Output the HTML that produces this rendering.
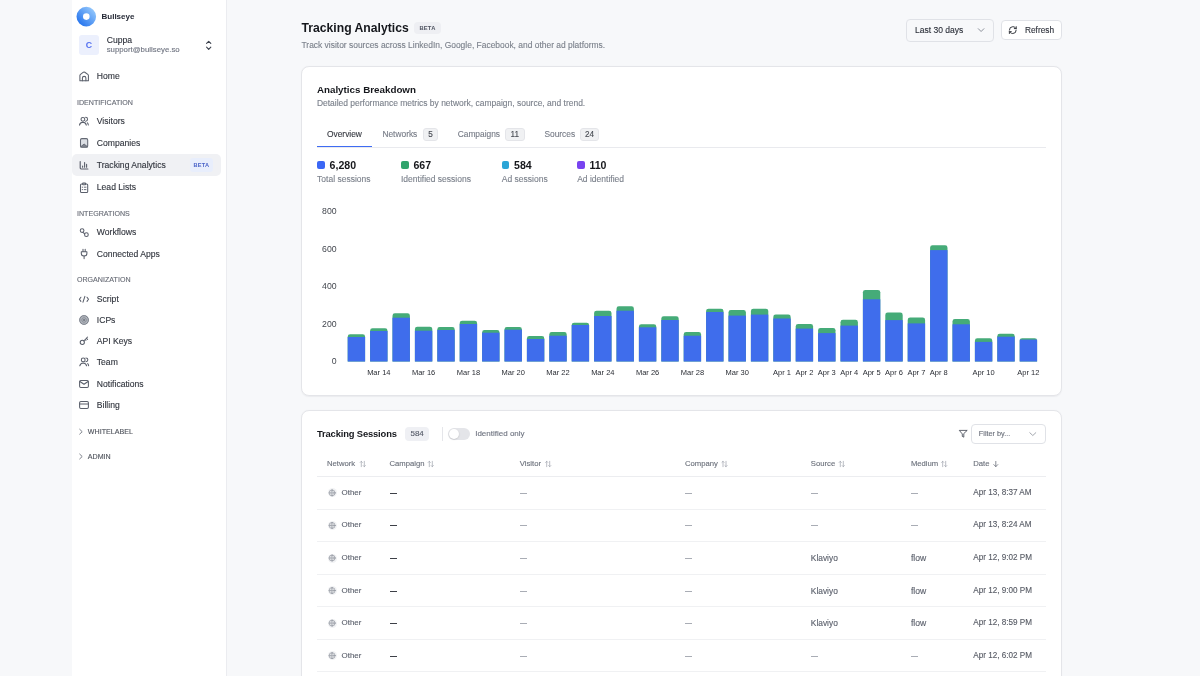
<!DOCTYPE html>
<html><head><meta charset="utf-8">
<style>
*{box-sizing:border-box;margin:0;padding:0}
html,body{width:1200px;height:676px;overflow:hidden}
body{will-change:transform;position:relative;background:#f7f8fa;font-family:"Liberation Sans",sans-serif;color:#1f2330}
.a{position:absolute}
.t{position:absolute;white-space:nowrap;line-height:20px;height:20px;-webkit-text-stroke:0.12px currentColor}
.t[style*="font-weight:700"]{-webkit-text-stroke:0}
svg{position:absolute;overflow:visible}
#sb{position:absolute;left:72px;top:0;width:155px;height:676px;background:#fff;border-right:1px solid #ebecf0}
.nav{font-size:8.6px;color:#30343d}
.sec{font-size:7.1px;color:#676b75;letter-spacing:0.02px}
.ic{fill:none;stroke-linecap:round;stroke-linejoin:round}
svg{stroke-width:1.1}
.card{position:absolute;left:301px;width:761px;background:#fff;border:1px solid #e4e5e9;border-radius:8px;box-shadow:0 0.6px 1.2px rgba(16,24,40,0.05)}
</style></head><body>
<!-- SIDEBAR -->
<div id="sb"></div>
<!-- logo -->
<svg width="1200" height="676" style="left:0;top:0">
  <defs>
    <linearGradient id="lg" x1="0" y1="1" x2="1" y2="0">
      <stop offset="0" stop-color="#2a78ee"/>
      <stop offset="1" stop-color="#8ec3fb"/>
    </linearGradient>
  </defs>
  <circle cx="86.3" cy="16.6" r="6.55" fill="none" stroke="url(#lg)" stroke-width="6.5"/>
</svg>
<div class="t" style="left:101.5px;top:7px;font-size:8px;font-weight:700;color:#1f2330">Bullseye</div>
<!-- account -->
<div class="a" style="left:79px;top:35px;width:20px;height:20px;border-radius:3px;background:#ecf0fd"></div>
<div class="t" style="left:79px;top:35px;width:20px;text-align:center;font-size:8.8px;font-weight:700;color:#5470f0">C</div>
<div class="t" style="left:106.7px;top:30px;font-size:8.6px;color:#2c303a">Cuppa</div>
<div class="t" style="left:106.7px;top:39.5px;font-size:7.8px;color:#6f7480">support@bullseye.so</div>
<svg style="left:0;top:0" width="1" height="1">
  <path class="ic" d="M206.6 43.4 L208.7 41.3 L210.8 43.4 M206.6 47.2 L208.7 49.3 L210.8 47.2" stroke="#3a3f4b"/>
</svg>
<!-- nav -->
<div class="t nav" style="left:96.8px;top:66px">Home</div>
<div class="t sec" style="left:76.9px;top:92.6px">IDENTIFICATION</div>
<div class="t nav" style="left:96.8px;top:111.4px">Visitors</div>
<div class="t nav" style="left:96.8px;top:132.8px">Companies</div>
<div class="a" style="left:72px;top:154px;width:148.7px;height:22px;border-radius:5px;background:#f0f1f4"></div>
<div class="t nav" style="left:96.8px;top:154.9px">Tracking Analytics</div>
<div class="a" style="left:190px;top:157.7px;width:22.7px;height:14.2px;border-radius:3px;background:#e8eefc"></div>
<div class="t" style="left:190px;top:154.8px;width:22.7px;text-align:center;font-size:5.6px;font-weight:700;color:#4a63c8;letter-spacing:0.2px">BETA</div>
<div class="t nav" style="left:96.8px;top:177px">Lead Lists</div>
<div class="t sec" style="left:76.9px;top:203.5px">INTEGRATIONS</div>
<div class="t nav" style="left:96.8px;top:222px">Workflows</div>
<div class="t nav" style="left:96.8px;top:243.6px">Connected Apps</div>
<div class="t sec" style="left:76.9px;top:270.2px">ORGANIZATION</div>
<div class="t nav" style="left:96.8px;top:288.8px">Script</div>
<div class="t nav" style="left:96.8px;top:310px">ICPs</div>
<div class="t nav" style="left:96.8px;top:331.2px">API Keys</div>
<div class="t nav" style="left:96.8px;top:352.3px">Team</div>
<div class="t nav" style="left:96.8px;top:373.5px">Notifications</div>
<div class="t nav" style="left:96.8px;top:394.7px">Billing</div>
<div class="t sec" style="left:87.8px;top:422.2px;color:#4f535c">WHITELABEL</div>
<div class="t sec" style="left:87.8px;top:447.2px;color:#4f535c">ADMIN</div>
<!--SIDEBAR_ICONS-->
<svg style="left:0;top:0" width="1" height="1"><g class="ic" stroke="#5a5f6b" stroke-width="1.05">
<!-- home -->
<path d="M79.9 80.7 L79.9 75.6 Q79.9 74.9 80.5 74.4 L83.4 72.2 Q84.1 71.7 84.8 72.2 L87.8 74.4 Q88.4 74.9 88.4 75.6 L88.4 80.7 Z"/>
<path d="M82.4 80.7 L82.4 78.1 A1.75 1.75 0 0 1 85.9 78.1 L85.9 80.7"/>
<!-- visitors -->
<circle cx="82.9" cy="119.3" r="1.9"/>
<path d="M79.5 125.1 Q80 122.4 82.9 122.3 Q85.8 122.4 86.3 125.1"/>
<path d="M85.6 117.3 A1.9 1.9 0 0 1 85.6 121.2 M87.4 122.9 Q88.2 123.6 88.3 125"/>
<!-- companies (bookmark) -->
<rect x="80.5" y="138.6" width="7.2" height="8.6" rx="1.3" fill="#dcdfe4" stroke="#636873"/>
<path d="M80.9 146.6 L84.1 144 L87.3 146.6 Z" fill="#7d828c" stroke="#636873" stroke-width="0.9"/>
<!-- tracking analytics -->
<path d="M80.2 161.6 L80.2 168.1 Q80.2 169 81.1 169 L87.9 169" stroke-width="1.15"/>
<path d="M82.6 166.1 L82.6 167.2 M84.6 162.6 L84.6 167.2 M86.6 164.4 L86.6 167.2" stroke-width="1.1"/>
<!-- lead lists (clipboard) -->
<rect x="80.5" y="184" width="7.2" height="8.5" rx="1.1"/>
<rect x="82.6" y="183.1" width="3" height="1.6" rx="0.5" fill="#fff"/>
<path d="M82.2 187.2 L82.7 187.2 M84.3 187.2 L86 187.2 M82.2 189.6 L82.7 189.6 M84.3 189.6 L86 189.6" stroke-width="0.9"/>
<!-- workflows -->
<circle cx="82.1" cy="230.6" r="1.85"/>
<circle cx="86.4" cy="234.7" r="1.85"/>
<path d="M82.9 232.3 L84.7 233.9"/>
<!-- connected apps (plug) -->
<path d="M83 249.3 L83 251.5 M85.2 249.3 L85.2 251.5"/>
<path d="M81.3 251.7 L86.9 251.7 L86.9 253.6 Q86.9 256 84.1 256 Q81.3 256 81.3 253.6 Z"/>
<path d="M84.1 256 L84.1 258.6"/>
<!-- script -->
<path d="M80.9 297.2 L79.4 299.3 L80.9 301.4 M87 297.2 L88.5 299.3 L87 301.4 M84.9 296.4 L83 302.2"/>
<!-- key -->
<circle cx="82.3" cy="342.3" r="2.1"/>
<path d="M83.8 340.8 L87.6 337 M86.4 338.2 L87.6 339.4 M85.2 339.4 L86 340.2"/>
<!-- team -->
<circle cx="83.2" cy="359.9" r="1.9"/>
<path d="M79.8 365.8 Q80.3 363 83.2 362.9 Q86.1 363 86.6 365.8"/>
<path d="M85.9 357.9 A1.9 1.9 0 0 1 85.9 361.8 M87.7 363.6 Q88.5 364.3 88.6 365.7"/>
<!-- notifications -->
<rect x="79.6" y="380.5" width="8.8" height="6.9" rx="1.2"/>
<path d="M79.9 381.5 L84 384.3 L88.1 381.5"/>
<!-- billing -->
<rect x="79.6" y="401.5" width="8.8" height="7" rx="1.3"/>
<path d="M79.6 404 L88.4 404"/>
<!-- chevrons -->
<path d="M79.7 429.3 L82.2 431.7 L79.7 434.1 M79.7 454.1 L82.2 456.5 L79.7 458.9" stroke="#6f747e" stroke-width="0.9"/>
</g>
<g fill="none" stroke="#5a5f6b">
<circle cx="84.05" cy="320" r="4.9" fill="#b3b7be" stroke="none"/>
<circle cx="84.05" cy="320" r="4.35" stroke="#7f848e" stroke-width="1"/>
<circle cx="84.05" cy="320" r="2.3" stroke="#858a94" stroke-width="0.9"/>
<circle cx="84.05" cy="320" r="0.95" fill="#6b707a" stroke="none"/>
</g></svg>
<!--/SIDEBAR_ICONS-->

<!-- HEADER -->
<div class="t" style="left:301.5px;top:18.3px;font-size:12.2px;font-weight:700;color:#15171c">Tracking Analytics</div>
<div class="a" style="left:414px;top:21.9px;width:27px;height:12.5px;border-radius:4px;background:#eeeff3"></div>
<div class="t" style="left:414px;top:18.1px;width:27px;text-align:center;font-size:5.8px;font-weight:700;color:#4f5461;letter-spacing:0.2px">BETA</div>
<div class="t" style="left:301.5px;top:34.6px;font-size:8.45px;color:#7b808b">Track visitor sources across LinkedIn, Google, Facebook, and other ad platforms.</div>
<div class="a" style="left:906.3px;top:19.2px;width:87.4px;height:22.6px;border-radius:4px;background:#f7f8fa;border:1px solid #e0e2e7"></div>
<div class="t" style="left:915px;top:20.1px;font-size:8.5px;color:#2c303a">Last 30 days</div>
<svg style="left:0;top:0" width="1" height="1"><path class="ic" d="M978.3 28.7 L981.1 31.5 L983.9 28.7" stroke="#80858f" stroke-width="0.9"/></svg>
<div class="a" style="left:1001.2px;top:20.3px;width:60.5px;height:20.2px;border-radius:4px;background:#fff;border:1px solid #e0e2e7"></div>
<div class="t" style="left:1025px;top:20.2px;font-size:8.3px;color:#2c303a">Refresh</div>
<svg style="left:0;top:0" width="1" height="1"><g class="ic" stroke="#2c2f36" stroke-width="2.5" transform="translate(1008.24 25.54) scale(0.38)"><path d="M3 12a9 9 0 0 1 9-9 9.75 9.75 0 0 1 6.74 2.74L21 8"/><path d="M21 3v5h-5"/><path d="M21 12a9 9 0 0 1-9 9 9.75 9.75 0 0 1-6.74-2.74L3 16"/><path d="M8 16H3v5"/></g></svg>


<!-- CARD 1 -->
<div class="card" style="top:66.3px;height:329.6px"></div>
<div class="t" style="left:316.9px;top:79.5px;font-size:9.8px;font-weight:700;color:#15171c">Analytics Breakdown</div>
<div class="t" style="left:316.9px;top:93.2px;font-size:8.47px;color:#7b808b">Detailed performance metrics by network, campaign, source, and trend.</div>
<div class="a" style="left:316.9px;top:147px;width:729px;height:1px;background:#e9eaee"></div>
<div class="a" style="left:317px;top:145.8px;width:55.2px;height:1.6px;background:#3f6cf3"></div>
<div class="t" style="left:327px;top:124.2px;font-size:8.4px;color:#33363e">Overview</div>
<div class="t" style="left:382.4px;top:124.2px;font-size:8.4px;color:#767b86">Networks</div>
<div class="a" style="left:423.3px;top:128.4px;width:14.5px;height:12.4px;border-radius:3px;background:#f0f1f3;border:0.5px solid #e4e5e9"></div>
<div class="t" style="left:423.3px;top:124.8px;width:14.5px;text-align:center;font-size:8.2px;color:#454951">5</div>
<div class="t" style="left:457.7px;top:124.2px;font-size:8.4px;color:#767b86">Campaigns</div>
<div class="a" style="left:504.9px;top:128.4px;width:19.7px;height:12.4px;border-radius:3px;background:#f0f1f3;border:0.5px solid #e4e5e9"></div>
<div class="t" style="left:504.9px;top:124.8px;width:19.7px;text-align:center;font-size:8.2px;color:#454951">11</div>
<div class="t" style="left:544.4px;top:124.2px;font-size:8.4px;color:#767b86">Sources</div>
<div class="a" style="left:580px;top:128.4px;width:19.1px;height:12.4px;border-radius:3px;background:#f0f1f3;border:0.5px solid #e4e5e9"></div>
<div class="t" style="left:580px;top:124.8px;width:19.1px;text-align:center;font-size:8.2px;color:#454951">24</div>
<div class="a" style="left:317.1px;top:161.4px;width:7.5px;height:7.5px;border-radius:2px;background:#3b67f5"></div>
<div class="t" style="left:329.6px;top:154.6px;font-size:10.6px;font-weight:700;color:#17181c">6,280</div>
<div class="t" style="left:317.1px;top:169.1px;font-size:8.5px;color:#7b808b">Total sessions</div>
<div class="a" style="left:401px;top:161.4px;width:7.5px;height:7.5px;border-radius:2px;background:#30a46c"></div>
<div class="t" style="left:413.4px;top:154.6px;font-size:10.6px;font-weight:700;color:#17181c">667</div>
<div class="t" style="left:401px;top:169.1px;font-size:8.5px;color:#7b808b">Identified sessions</div>
<div class="a" style="left:501.8px;top:161.4px;width:7.5px;height:7.5px;border-radius:2px;background:#2ba5d6"></div>
<div class="t" style="left:514px;top:154.6px;font-size:10.6px;font-weight:700;color:#17181c">584</div>
<div class="t" style="left:501.8px;top:169.1px;font-size:8.5px;color:#7b808b">Ad sessions</div>
<div class="a" style="left:577.2px;top:161.4px;width:7.5px;height:7.5px;border-radius:2px;background:#7843f0"></div>
<div class="t" style="left:589.4px;top:154.6px;font-size:10.6px;font-weight:700;color:#17181c">110</div>
<div class="t" style="left:577.2px;top:169.1px;font-size:8.5px;color:#7b808b">Ad identified</div>
<!--CHART-->
<svg style="left:0;top:0" width="1200" height="676">
<g fill="#45ab78"><path d="M347.70 361.5 L347.70 336.70 Q347.70 334.30 350.10 334.30 L362.70 334.30 Q365.10 334.30 365.10 336.70 L365.10 361.5 Z"/><path d="M370.10 361.5 L370.10 330.70 Q370.10 328.30 372.50 328.30 L385.10 328.30 Q387.50 328.30 387.50 330.70 L387.50 361.5 Z"/><path d="M392.50 361.5 L392.50 315.70 Q392.50 313.30 394.90 313.30 L407.50 313.30 Q409.90 313.30 409.90 315.70 L409.90 361.5 Z"/><path d="M414.90 361.5 L414.90 329.10 Q414.90 326.70 417.30 326.70 L429.90 326.70 Q432.30 326.70 432.30 329.10 L432.30 361.5 Z"/><path d="M437.30 361.5 L437.30 329.40 Q437.30 327.00 439.70 327.00 L452.30 327.00 Q454.70 327.00 454.70 329.40 L454.70 361.5 Z"/><path d="M459.70 361.5 L459.70 323.10 Q459.70 320.70 462.10 320.70 L474.70 320.70 Q477.10 320.70 477.10 323.10 L477.10 361.5 Z"/><path d="M482.10 361.5 L482.10 332.40 Q482.10 330.00 484.50 330.00 L497.10 330.00 Q499.50 330.00 499.50 332.40 L499.50 361.5 Z"/><path d="M504.50 361.5 L504.50 329.40 Q504.50 327.00 506.90 327.00 L519.50 327.00 Q521.90 327.00 521.90 329.40 L521.90 361.5 Z"/><path d="M526.90 361.5 L526.90 338.40 Q526.90 336.00 529.30 336.00 L541.90 336.00 Q544.30 336.00 544.30 338.40 L544.30 361.5 Z"/><path d="M549.30 361.5 L549.30 334.40 Q549.30 332.00 551.70 332.00 L564.30 332.00 Q566.70 332.00 566.70 334.40 L566.70 361.5 Z"/><path d="M571.70 361.5 L571.70 325.10 Q571.70 322.70 574.10 322.70 L586.70 322.70 Q589.10 322.70 589.10 325.10 L589.10 361.5 Z"/><path d="M594.10 361.5 L594.10 313.10 Q594.10 310.70 596.50 310.70 L609.10 310.70 Q611.50 310.70 611.50 313.10 L611.50 361.5 Z"/><path d="M616.50 361.5 L616.50 308.70 Q616.50 306.30 618.90 306.30 L631.50 306.30 Q633.90 306.30 633.90 308.70 L633.90 361.5 Z"/><path d="M638.90 361.5 L638.90 326.70 Q638.90 324.30 641.30 324.30 L653.90 324.30 Q656.30 324.30 656.30 326.70 L656.30 361.5 Z"/><path d="M661.30 361.5 L661.30 318.70 Q661.30 316.30 663.70 316.30 L676.30 316.30 Q678.70 316.30 678.70 318.70 L678.70 361.5 Z"/><path d="M683.70 361.5 L683.70 334.50 Q683.70 332.10 686.10 332.10 L698.70 332.10 Q701.10 332.10 701.10 334.50 L701.10 361.5 Z"/><path d="M706.10 361.5 L706.10 311.10 Q706.10 308.70 708.50 308.70 L721.10 308.70 Q723.50 308.70 723.50 311.10 L723.50 361.5 Z"/><path d="M728.50 361.5 L728.50 312.40 Q728.50 310.00 730.90 310.00 L743.50 310.00 Q745.90 310.00 745.90 312.40 L745.90 361.5 Z"/><path d="M750.90 361.5 L750.90 311.10 Q750.90 308.70 753.30 308.70 L765.90 308.70 Q768.30 308.70 768.30 311.10 L768.30 361.5 Z"/><path d="M773.30 361.5 L773.30 317.00 Q773.30 314.60 775.70 314.60 L788.30 314.60 Q790.70 314.60 790.70 317.00 L790.70 361.5 Z"/><path d="M795.70 361.5 L795.70 326.40 Q795.70 324.00 798.10 324.00 L810.70 324.00 Q813.10 324.00 813.10 326.40 L813.10 361.5 Z"/><path d="M818.10 361.5 L818.10 330.30 Q818.10 327.90 820.50 327.90 L833.10 327.90 Q835.50 327.90 835.50 330.30 L835.50 361.5 Z"/><path d="M840.50 361.5 L840.50 322.20 Q840.50 319.80 842.90 319.80 L855.50 319.80 Q857.90 319.80 857.90 322.20 L857.90 361.5 Z"/><path d="M862.90 361.5 L862.90 292.30 Q862.90 289.90 865.30 289.90 L877.90 289.90 Q880.30 289.90 880.30 292.30 L880.30 361.5 Z"/><path d="M885.30 361.5 L885.30 315.00 Q885.30 312.60 887.70 312.60 L900.30 312.60 Q902.70 312.60 902.70 315.00 L902.70 361.5 Z"/><path d="M907.70 361.5 L907.70 319.90 Q907.70 317.50 910.10 317.50 L922.70 317.50 Q925.10 317.50 925.10 319.90 L925.10 361.5 Z"/><path d="M930.10 361.5 L930.10 247.70 Q930.10 245.30 932.50 245.30 L945.10 245.30 Q947.50 245.30 947.50 247.70 L947.50 361.5 Z"/><path d="M952.50 361.5 L952.50 321.50 Q952.50 319.10 954.90 319.10 L967.50 319.10 Q969.90 319.10 969.90 321.50 L969.90 361.5 Z"/><path d="M974.90 361.5 L974.90 340.70 Q974.90 338.30 977.30 338.30 L989.90 338.30 Q992.30 338.30 992.30 340.70 L992.30 361.5 Z"/><path d="M997.30 361.5 L997.30 336.20 Q997.30 333.80 999.70 333.80 L1012.30 333.80 Q1014.70 333.80 1014.70 336.20 L1014.70 361.5 Z"/><path d="M1019.70 361.5 L1019.70 340.70 Q1019.70 338.30 1022.10 338.30 L1034.70 338.30 Q1037.10 338.30 1037.10 340.70 L1037.10 361.5 Z"/></g>
<g fill="#3f6dec">
<rect x="347.70" y="337.00" width="17.4" height="24.50"/>
<rect x="370.10" y="331.00" width="17.4" height="30.50"/>
<rect x="392.50" y="317.70" width="17.4" height="43.80"/>
<rect x="414.90" y="330.70" width="17.4" height="30.80"/>
<rect x="437.30" y="330.00" width="17.4" height="31.50"/>
<rect x="459.70" y="324.00" width="17.4" height="37.50"/>
<rect x="482.10" y="332.70" width="17.4" height="28.80"/>
<rect x="504.50" y="329.70" width="17.4" height="31.80"/>
<rect x="526.90" y="339.00" width="17.4" height="22.50"/>
<rect x="549.30" y="335.70" width="17.4" height="25.80"/>
<rect x="571.70" y="325.00" width="17.4" height="36.50"/>
<rect x="594.10" y="316.00" width="17.4" height="45.50"/>
<rect x="616.50" y="310.70" width="17.4" height="50.80"/>
<rect x="638.90" y="327.30" width="17.4" height="34.20"/>
<rect x="661.30" y="320.00" width="17.4" height="41.50"/>
<rect x="683.70" y="335.70" width="17.4" height="25.80"/>
<rect x="706.10" y="312.00" width="17.4" height="49.50"/>
<rect x="728.50" y="315.60" width="17.4" height="45.90"/>
<rect x="750.90" y="314.60" width="17.4" height="46.90"/>
<rect x="773.30" y="318.50" width="17.4" height="43.00"/>
<rect x="795.70" y="328.60" width="17.4" height="32.90"/>
<rect x="818.10" y="333.10" width="17.4" height="28.40"/>
<rect x="840.50" y="325.60" width="17.4" height="35.90"/>
<rect x="862.90" y="299.30" width="17.4" height="62.20"/>
<rect x="885.30" y="320.10" width="17.4" height="41.40"/>
<rect x="907.70" y="323.40" width="17.4" height="38.10"/>
<rect x="930.10" y="250.10" width="17.4" height="111.40"/>
<rect x="952.50" y="324.30" width="17.4" height="37.20"/>
<rect x="974.90" y="341.90" width="17.4" height="19.60"/>
<rect x="997.30" y="336.70" width="17.4" height="24.80"/>
<rect x="1019.70" y="339.60" width="17.4" height="21.90"/>
</g>
<g font-family="Liberation Sans" font-size="8.7" fill="#42464e" text-anchor="end">
<text x="336.6" y="214.10">800</text>
<text x="336.6" y="251.60">600</text>
<text x="336.6" y="289.10">400</text>
<text x="336.6" y="326.60">200</text>
<text x="336.6" y="364.10">0</text>
</g><g font-family="Liberation Sans" font-size="7.5" fill="#2a2d34" text-anchor="middle">
<text x="378.80" y="375.3">Mar 14</text>
<text x="423.60" y="375.3">Mar 16</text>
<text x="468.40" y="375.3">Mar 18</text>
<text x="513.20" y="375.3">Mar 20</text>
<text x="558.00" y="375.3">Mar 22</text>
<text x="602.80" y="375.3">Mar 24</text>
<text x="647.60" y="375.3">Mar 26</text>
<text x="692.40" y="375.3">Mar 28</text>
<text x="737.20" y="375.3">Mar 30</text>
<text x="782.00" y="375.3">Apr 1</text>
<text x="804.40" y="375.3">Apr 2</text>
<text x="826.80" y="375.3">Apr 3</text>
<text x="849.20" y="375.3">Apr 4</text>
<text x="871.60" y="375.3">Apr 5</text>
<text x="894.00" y="375.3">Apr 6</text>
<text x="916.40" y="375.3">Apr 7</text>
<text x="938.80" y="375.3">Apr 8</text>
<text x="983.60" y="375.3">Apr 10</text>
<text x="1028.40" y="375.3">Apr 12</text>
</g></svg>
<!--/CHART-->


<!-- CARD 2 -->
<div class="card" style="top:410.1px;height:300px"></div>
<div class="t" style="left:317px;top:424px;font-size:9.4px;font-weight:700;letter-spacing:-0.15px;color:#15171c">Tracking Sessions</div>
<div class="a" style="left:404.8px;top:427px;width:24.7px;height:13.5px;border-radius:4px;background:#eff0f4"></div>
<div class="t" style="left:404.8px;top:423.6px;width:24.7px;text-align:center;font-size:8px;color:#565b68">584</div>
<div class="a" style="left:442px;top:427px;width:0.8px;height:14px;background:#e5e6ea"></div>
<div class="a" style="left:447.6px;top:428px;width:22.4px;height:12.1px;border-radius:6.05px;background:#e4e5e9"></div>
<div class="a" style="left:448.8px;top:429.1px;width:9.9px;height:9.9px;border-radius:50%;background:#fff;box-shadow:0 0.5px 1.5px rgba(0,0,0,0.18)"></div>
<div class="t" style="left:475.2px;top:423.7px;font-size:8px;color:#6f7480">Identified only</div>
<svg style="left:0;top:0" width="1" height="1"><path class="ic" stroke="#3a3f4b" stroke-width="0.8" d="M966.8 430.4 L959.3 430.4 L962.3 433.95 L962.3 436.4 L963.8 437.15 L963.8 433.95 Z"/></svg>
<div class="a" style="left:971.2px;top:423.9px;width:74.7px;height:20.2px;border-radius:4px;background:#fff;border:1px solid #e0e2e7"></div>
<div class="t" style="left:978.8px;top:424.1px;font-size:7.3px;color:#6b707b">Filter by...</div>
<svg style="left:0;top:0" width="1" height="1"><path class="ic" stroke="#8a8f99" stroke-width="0.8" d="M1029.8 432.7 L1032.8 435.5 L1035.8 432.7"/></svg>
<div class="t" style="left:327px;top:454.0px;font-size:7.7px;color:#6b707b">Network</div>
<svg style="left:0;top:0" width="1" height="1"><path class="ic" stroke="#a3a7b0" stroke-width="0.75" d="M361.30 466.70 L361.30 461.30 M360.20 462.40 L361.30 461.30 L362.40 462.40 M364.30 461.30 L364.30 466.70 M363.20 465.60 L364.30 466.70 L365.40 465.60"/></svg>
<div class="t" style="left:389.5px;top:454.0px;font-size:7.7px;color:#6b707b">Campaign</div>
<svg style="left:0;top:0" width="1" height="1"><path class="ic" stroke="#a3a7b0" stroke-width="0.75" d="M429.30 466.70 L429.30 461.30 M428.20 462.40 L429.30 461.30 L430.40 462.40 M432.30 461.30 L432.30 466.70 M431.20 465.60 L432.30 466.70 L433.40 465.60"/></svg>
<div class="t" style="left:519.8px;top:454.0px;font-size:7.7px;color:#6b707b">Visitor</div>
<svg style="left:0;top:0" width="1" height="1"><path class="ic" stroke="#a3a7b0" stroke-width="0.75" d="M546.70 466.70 L546.70 461.30 M545.60 462.40 L546.70 461.30 L547.80 462.40 M549.70 461.30 L549.70 466.70 M548.60 465.60 L549.70 466.70 L550.80 465.60"/></svg>
<div class="t" style="left:685px;top:454.0px;font-size:7.7px;color:#6b707b">Company</div>
<svg style="left:0;top:0" width="1" height="1"><path class="ic" stroke="#a3a7b0" stroke-width="0.75" d="M723.00 466.70 L723.00 461.30 M721.90 462.40 L723.00 461.30 L724.10 462.40 M726.00 461.30 L726.00 466.70 M724.90 465.60 L726.00 466.70 L727.10 465.60"/></svg>
<div class="t" style="left:810.8px;top:454.0px;font-size:7.7px;color:#6b707b">Source</div>
<svg style="left:0;top:0" width="1" height="1"><path class="ic" stroke="#a3a7b0" stroke-width="0.75" d="M840.30 466.70 L840.30 461.30 M839.20 462.40 L840.30 461.30 L841.40 462.40 M843.30 461.30 L843.30 466.70 M842.20 465.60 L843.30 466.70 L844.40 465.60"/></svg>
<div class="t" style="left:910.9px;top:454.0px;font-size:7.7px;color:#6b707b">Medium</div>
<svg style="left:0;top:0" width="1" height="1"><path class="ic" stroke="#a3a7b0" stroke-width="0.75" d="M942.70 466.70 L942.70 461.30 M941.60 462.40 L942.70 461.30 L943.80 462.40 M945.70 461.30 L945.70 466.70 M944.60 465.60 L945.70 466.70 L946.80 465.60"/></svg>
<div class="t" style="left:973.3px;top:454.0px;font-size:7.7px;color:#6b707b">Date</div>
<svg style="left:0;top:0" width="1" height="1"><path class="ic" stroke="#6b707b" stroke-width="0.8" d="M995.8 461.4 L995.8 466.6 M993.8 464.6 L995.8 466.6 L997.8 464.6"/></svg>
<div class="a" style="left:317px;top:476.10px;width:729px;height:0.8px;background:#ecedf0"></div>
<div class="a" style="left:317px;top:508.65px;width:729px;height:0.8px;background:#f0f1f3"></div>
<div class="a" style="left:327.6px;top:488.40px;width:9px;height:9px;border-radius:50%;background:#f1f2f4"></div>
<svg style="left:0;top:0" width="1" height="1"><g class="ic" stroke="#868b95" stroke-width="0.6"><circle cx="332.1" cy="492.90" r="3"/><path d="M329.1 492.90 L335.1 492.90 M332.1 489.90 C330.6 491.40 330.6 494.40 332.1 495.90 M332.1 489.90 C333.6 491.40 333.6 494.40 332.1 495.90"/></g></svg>
<div class="t" style="left:341.6px;top:482.90px;font-size:7.9px;color:#5b606c">Other</div>
<div class="a" style="left:389.5px;top:493px;width:7px;height:1.2px;background:#3d4048"></div>
<div class="a" style="left:519.8px;top:493.1px;width:7.3px;height:0.9px;background:#a9adb5"></div>
<div class="a" style="left:685px;top:493.1px;width:7.3px;height:0.9px;background:#a9adb5"></div>
<div class="a" style="left:810.8px;top:493.1px;width:7.3px;height:0.9px;background:#a9adb5"></div>
<div class="a" style="left:910.9px;top:493.1px;width:7.3px;height:0.9px;background:#a9adb5"></div>
<div class="t" style="left:973.3px;top:482.90px;font-size:8.15px;color:#575b65">Apr 13, 8:37 AM</div>
<div class="a" style="left:317px;top:541.20px;width:729px;height:0.8px;background:#f0f1f3"></div>
<div class="a" style="left:327.6px;top:520.95px;width:9px;height:9px;border-radius:50%;background:#f1f2f4"></div>
<svg style="left:0;top:0" width="1" height="1"><g class="ic" stroke="#868b95" stroke-width="0.6"><circle cx="332.1" cy="525.45" r="3"/><path d="M329.1 525.45 L335.1 525.45 M332.1 522.45 C330.6 523.95 330.6 526.95 332.1 528.45 M332.1 522.45 C333.6 523.95 333.6 526.95 332.1 528.45"/></g></svg>
<div class="t" style="left:341.6px;top:515.45px;font-size:7.9px;color:#5b606c">Other</div>
<div class="a" style="left:389.5px;top:525px;width:7px;height:1.2px;background:#3d4048"></div>
<div class="a" style="left:519.8px;top:525.1px;width:7.3px;height:0.9px;background:#a9adb5"></div>
<div class="a" style="left:685px;top:525.1px;width:7.3px;height:0.9px;background:#a9adb5"></div>
<div class="a" style="left:810.8px;top:525.1px;width:7.3px;height:0.9px;background:#a9adb5"></div>
<div class="a" style="left:910.9px;top:525.1px;width:7.3px;height:0.9px;background:#a9adb5"></div>
<div class="t" style="left:973.3px;top:515.45px;font-size:8.15px;color:#575b65">Apr 13, 8:24 AM</div>
<div class="a" style="left:317px;top:573.75px;width:729px;height:0.8px;background:#f0f1f3"></div>
<div class="a" style="left:327.6px;top:553.50px;width:9px;height:9px;border-radius:50%;background:#f1f2f4"></div>
<svg style="left:0;top:0" width="1" height="1"><g class="ic" stroke="#868b95" stroke-width="0.6"><circle cx="332.1" cy="558.00" r="3"/><path d="M329.1 558.00 L335.1 558.00 M332.1 555.00 C330.6 556.50 330.6 559.50 332.1 561.00 M332.1 555.00 C333.6 556.50 333.6 559.50 332.1 561.00"/></g></svg>
<div class="t" style="left:341.6px;top:548.00px;font-size:7.9px;color:#5b606c">Other</div>
<div class="a" style="left:389.5px;top:558px;width:7px;height:1.2px;background:#3d4048"></div>
<div class="a" style="left:519.8px;top:558.1px;width:7.3px;height:0.9px;background:#a9adb5"></div>
<div class="a" style="left:685px;top:558.1px;width:7.3px;height:0.9px;background:#a9adb5"></div>
<div class="t" style="left:810.8px;top:548.00px;font-size:8.4px;color:#5b606c">Klaviyo</div>
<div class="t" style="left:910.9px;top:548.00px;font-size:8.6px;color:#5b606c">flow</div>
<div class="t" style="left:973.3px;top:548.00px;font-size:8.15px;color:#575b65">Apr 12, 9:02 PM</div>
<div class="a" style="left:317px;top:606.30px;width:729px;height:0.8px;background:#f0f1f3"></div>
<div class="a" style="left:327.6px;top:586.05px;width:9px;height:9px;border-radius:50%;background:#f1f2f4"></div>
<svg style="left:0;top:0" width="1" height="1"><g class="ic" stroke="#868b95" stroke-width="0.6"><circle cx="332.1" cy="590.55" r="3"/><path d="M329.1 590.55 L335.1 590.55 M332.1 587.55 C330.6 589.05 330.6 592.05 332.1 593.55 M332.1 587.55 C333.6 589.05 333.6 592.05 332.1 593.55"/></g></svg>
<div class="t" style="left:341.6px;top:580.55px;font-size:7.9px;color:#5b606c">Other</div>
<div class="a" style="left:389.5px;top:591px;width:7px;height:1.2px;background:#3d4048"></div>
<div class="a" style="left:519.8px;top:591.1px;width:7.3px;height:0.9px;background:#a9adb5"></div>
<div class="a" style="left:685px;top:591.1px;width:7.3px;height:0.9px;background:#a9adb5"></div>
<div class="t" style="left:810.8px;top:580.55px;font-size:8.4px;color:#5b606c">Klaviyo</div>
<div class="t" style="left:910.9px;top:580.55px;font-size:8.6px;color:#5b606c">flow</div>
<div class="t" style="left:973.3px;top:580.55px;font-size:8.15px;color:#575b65">Apr 12, 9:00 PM</div>
<div class="a" style="left:317px;top:638.85px;width:729px;height:0.8px;background:#f0f1f3"></div>
<div class="a" style="left:327.6px;top:618.60px;width:9px;height:9px;border-radius:50%;background:#f1f2f4"></div>
<svg style="left:0;top:0" width="1" height="1"><g class="ic" stroke="#868b95" stroke-width="0.6"><circle cx="332.1" cy="623.10" r="3"/><path d="M329.1 623.10 L335.1 623.10 M332.1 620.10 C330.6 621.60 330.6 624.60 332.1 626.10 M332.1 620.10 C333.6 621.60 333.6 624.60 332.1 626.10"/></g></svg>
<div class="t" style="left:341.6px;top:613.10px;font-size:7.9px;color:#5b606c">Other</div>
<div class="a" style="left:389.5px;top:623px;width:7px;height:1.2px;background:#3d4048"></div>
<div class="a" style="left:519.8px;top:623.1px;width:7.3px;height:0.9px;background:#a9adb5"></div>
<div class="a" style="left:685px;top:623.1px;width:7.3px;height:0.9px;background:#a9adb5"></div>
<div class="t" style="left:810.8px;top:613.10px;font-size:8.4px;color:#5b606c">Klaviyo</div>
<div class="t" style="left:910.9px;top:613.10px;font-size:8.6px;color:#5b606c">flow</div>
<div class="t" style="left:973.3px;top:613.10px;font-size:8.15px;color:#575b65">Apr 12, 8:59 PM</div>
<div class="a" style="left:317px;top:671.40px;width:729px;height:0.8px;background:#f0f1f3"></div>
<div class="a" style="left:327.6px;top:651.15px;width:9px;height:9px;border-radius:50%;background:#f1f2f4"></div>
<svg style="left:0;top:0" width="1" height="1"><g class="ic" stroke="#868b95" stroke-width="0.6"><circle cx="332.1" cy="655.65" r="3"/><path d="M329.1 655.65 L335.1 655.65 M332.1 652.65 C330.6 654.15 330.6 657.15 332.1 658.65 M332.1 652.65 C333.6 654.15 333.6 657.15 332.1 658.65"/></g></svg>
<div class="t" style="left:341.6px;top:645.65px;font-size:7.9px;color:#5b606c">Other</div>
<div class="a" style="left:389.5px;top:656px;width:7px;height:1.2px;background:#3d4048"></div>
<div class="a" style="left:519.8px;top:656.1px;width:7.3px;height:0.9px;background:#a9adb5"></div>
<div class="a" style="left:685px;top:656.1px;width:7.3px;height:0.9px;background:#a9adb5"></div>
<div class="a" style="left:810.8px;top:656.1px;width:7.3px;height:0.9px;background:#a9adb5"></div>
<div class="a" style="left:910.9px;top:656.1px;width:7.3px;height:0.9px;background:#a9adb5"></div>
<div class="t" style="left:973.3px;top:645.65px;font-size:8.15px;color:#575b65">Apr 12, 6:02 PM</div>
</body></html>
